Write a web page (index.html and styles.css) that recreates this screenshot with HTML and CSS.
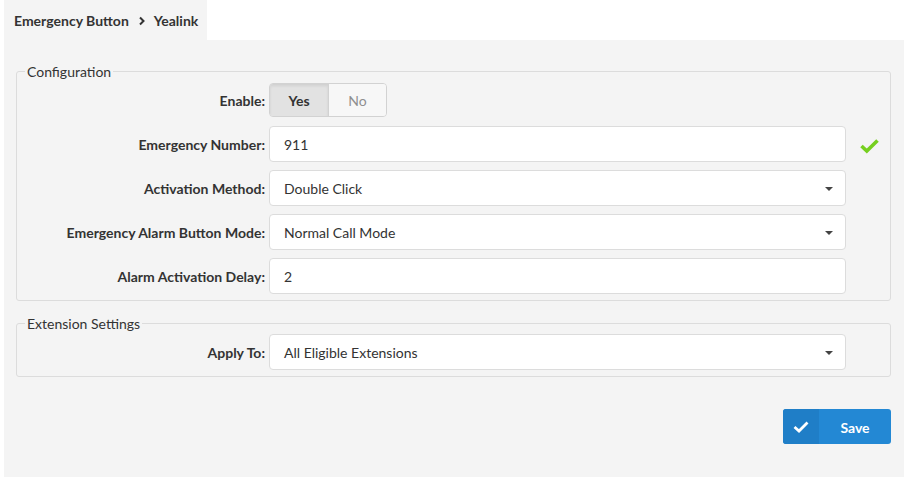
FILE: index.html
```html
<!DOCTYPE html>
<html>
<head>
<meta charset="utf-8">
<link rel="stylesheet" href="styles.css">
</head>
<body>
<div class="page">
  <div class="tabs">
    <div class="tab">
      <span>Emergency Button</span>
      <svg class="chev" width="8" height="10" viewBox="0 0 8 10"><path d="M2 1.5 L5.5 5 L2 8.5" fill="none" stroke="#333" stroke-width="2"/></svg>
      <span>Yealink</span>
    </div>
  </div>
  <div class="panel">
    <fieldset class="group">
      <legend>Configuration</legend>
      <div class="form">
        <label class="lbl">Enable:</label>
        <div class="field">
          <div class="toggle">
            <span class="opt on">Yes</span>
            <span class="opt off">No</span>
          </div>
        </div>
        <div></div>

        <label class="lbl">Emergency Number:</label>
        <div class="field"><div class="input">911</div></div>
        <div class="ok">
          <svg width="19" height="16" viewBox="0 0 19 16"><path d="M1.5 8 L6.8 13 L17.5 2.5" fill="none" stroke="#76cf1f" stroke-width="3.6" stroke-linecap="butt" stroke-linejoin="miter"/></svg>
        </div>

        <label class="lbl">Activation Method:</label>
        <div class="field"><div class="input select">Double Click<i class="caret"></i></div></div>
        <div></div>

        <label class="lbl">Emergency Alarm Button Mode:</label>
        <div class="field"><div class="input select">Normal Call Mode<i class="caret"></i></div></div>
        <div></div>

        <label class="lbl">Alarm Activation Delay:</label>
        <div class="field"><div class="input">2</div></div>
        <div></div>
      </div>
    </fieldset>

    <fieldset class="group second">
      <legend>Extension Settings</legend>
      <div class="form">
        <label class="lbl">Apply To:</label>
        <div class="field"><div class="input select">All Eligible Extensions<i class="caret"></i></div></div>
        <div></div>
      </div>
    </fieldset>

    <div class="actions">
      <button class="save">
        <span class="save-icon">
          <svg width="16" height="12" viewBox="0 0 16 12"><path d="M1.5 6 L6 10 L14.5 1.5" fill="none" stroke="#fff" stroke-width="2.8"/></svg>
        </span>
        <span class="save-text">Save</span>
      </button>
    </div>
  </div>
</div>
</body>
</html>
```
FILE: styles.css
```css
* { box-sizing: border-box; }
html, body { margin: 0; padding: 0; background: #fff; }
body {
  font-family: Lato, "Open Sans", "Liberation Sans", sans-serif;
  color: #333;
  font-size: 14px;
}
.page {
  width: 908px;
  padding-left: 4px;
}
.tabs { display: flex; height: 40px; }
.tab {
  width: 203px;
  height: 40px;
  background: #f4f4f4;
  display: flex;
  align-items: center;
  padding-left: 10px;
  font-weight: bold;
  font-size: 14px;
}
.chev { margin: 1px 8px 0 9px; }
.panel {
  width: 900px;
  height: 437px;
  background: #f4f4f4;
  padding: 23px 13px 0 12px;
}
.group {
  margin: 0;
  border: 1px solid #dcdcdc;
  border-radius: 3px;
  padding: 2px 0 6px 0;
  min-width: 0;
}
.group legend {
  margin-left: 8px;
  padding: 0 2px;
  font-size: 14px;
  line-height: 17px;
  color: #333;
}
.second { margin-top: 14px; }
.form {
  display: grid;
  grid-template-columns: 252px 577px 1fr;
  row-gap: 8px;
  align-items: center;
}
.lbl {
  text-align: right;
  font-weight: bold;
  font-size: 14px;
  padding-right: 4px;
  padding-top: 1px;
  height: 36px;
  line-height: 36px;
  white-space: nowrap;
}
.field { height: 36px; display: flex; align-items: center; }
.toggle {
  display: flex;
  height: 34px;
  border: 1px solid #d2d2d2;
  border-radius: 4px;
  overflow: hidden;
}
.opt {
  display: flex;
  align-items: center;
  justify-content: center;
  font-size: 14px;
  padding-top: 1px;
}
.opt.on {
  width: 59px;
  background: #e2e2e2;
  font-weight: bold;
  color: #333;
  box-shadow: inset 0 2px 3px rgba(0,0,0,0.08);
  border-right: 1px solid #d2d2d2;
}
.opt.off {
  width: 57px;
  background: #f7f7f7;
  color: #8f8f8f;
}
.input {
  position: relative;
  width: 577px;
  height: 36px;
  border: 1px solid #dcdcdc;
  border-radius: 4px;
  background: #fff;
  padding: 1px 0 0 14px;
  line-height: 34px;
  font-size: 14px;
  color: #333;
}
.caret {
  position: absolute;
  right: 12px;
  top: 16px;
  width: 0;
  height: 0;
  border-left: 4px solid transparent;
  border-right: 4px solid transparent;
  border-top: 4px solid #444;
}
.ok {
  display: flex;
  align-items: center;
  padding-left: 14px;
  padding-top: 4px;
  height: 36px;
}
.actions {
  display: flex;
  justify-content: flex-end;
  margin-top: 32px;
}
.save {
  display: flex;
  width: 108px;
  height: 35px;
  padding: 0;
  border: none;
  border-radius: 3px;
  overflow: hidden;
  background: #2388d4;
  font-family: inherit;
  cursor: pointer;
}
.save-icon {
  width: 36px;
  height: 35px;
  background: #1f7ec7;
  display: flex;
  align-items: center;
  justify-content: center;
}
.save-text {
  flex: 1;
  display: flex;
  align-items: center;
  justify-content: center;
  color: #fff;
  font-weight: bold;
  font-size: 14px;
  padding-top: 1px;
}
```
